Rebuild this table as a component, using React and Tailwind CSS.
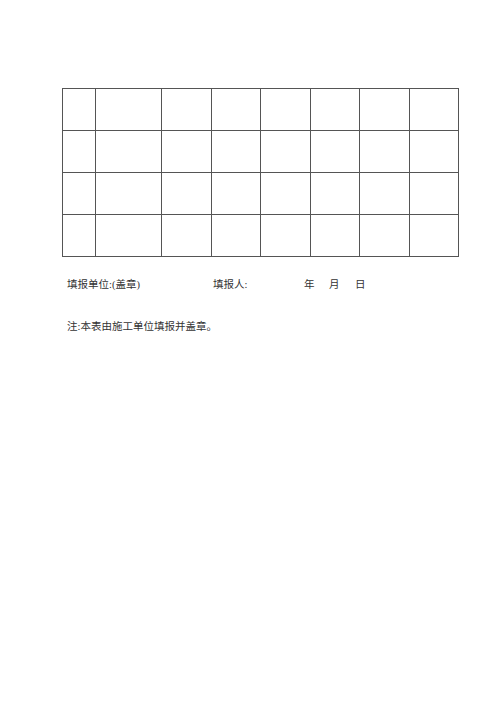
export default function App() {
  const cols = [33, 66, 50, 49, 50, 49, 50, 49];
  const rows = [0, 1, 2, 3];

  return (
    <div className="w-[500px] h-[707px] bg-white text-[#333] font-['Liberation_Serif','Noto_Sans_CJK_SC',serif]">
      <div className="pt-[88px] pl-[62px]">
        <table className="border-collapse">
          <tbody>
            {rows.map((r) => (
              <tr key={r} className="h-[42px]">
                {cols.map((w, i) => (
                  <td key={i} className="border border-[#555] p-0" style={{ width: w }} />
                ))}
              </tr>
            ))}
          </tbody>
        </table>
      </div>

      <div className="pl-[67px] pt-[21px] flex items-center text-[10.5px] leading-[14px]">
        <span className="w-[146px]">填报单位:(盖章)</span>
        <span className="w-[91px]">填报人:</span>
        <span className="w-[25px]">年</span>
        <span className="w-[26px]">月</span>
        <span>日</span>
      </div>

      <div className="pl-[67px] pt-[28px] text-[10.5px] leading-[14px]">注:本表由施工单位填报并盖章。</div>
    </div>
  );
}
